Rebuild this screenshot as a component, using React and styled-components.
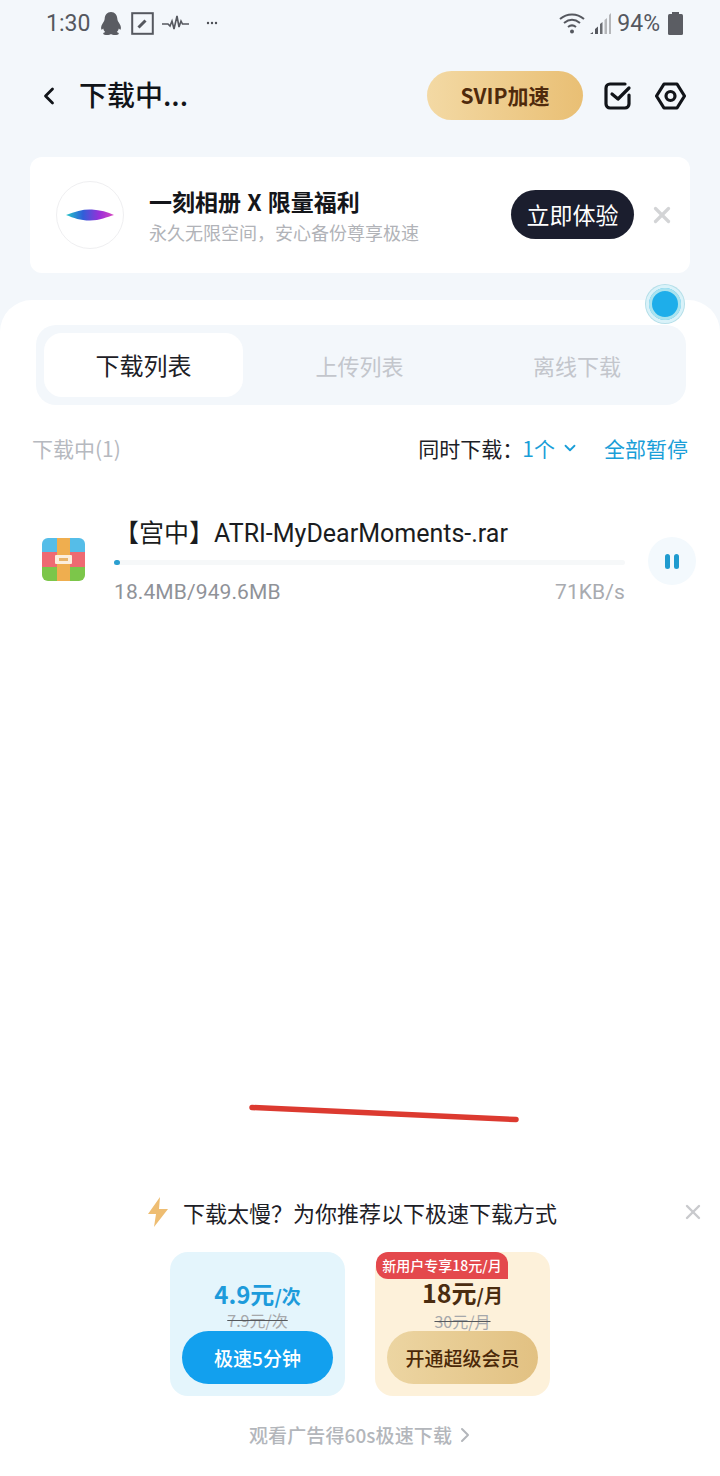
import styled, { createGlobalStyle } from "styled-components";
import { ChevronLeft, ChevronDown, ChevronRight, X } from "lucide-react";

const cjk = `"Noto Sans CJK SC", "Noto Sans", sans-serif`;
const latin = `Roboto, "Noto Sans CJK SC", sans-serif`;

const GlobalStyle = createGlobalStyle`
  * { box-sizing: border-box; }
  html, body { margin: 0; padding: 0; background: #f3f7fb; }
  body { font-family: ${cjk}; }
`;

const Page = styled.div`
  position: relative;
  width: 720px;
  height: 1476px;
  overflow: hidden;
  display: flex;
  flex-direction: column;
  background: #f3f7fb;
`;

const StatusBar = styled.div`
  height: 46px;
  padding: 0 37px 0 46px;
  display: flex;
  align-items: center;
  color: #55585f;
`;

const Clock = styled.span`
  font: 400 23px/1 ${latin};
  margin-right: 9px;
`;

const StatusLeft = styled.div`
  display: flex;
  align-items: center;
  gap: 8px;
`;

const StatusRight = styled.div`
  margin-left: auto;
  display: flex;
  align-items: center;
  gap: 4px;
`;

const Battery = styled.span`
  font: 400 23px/1 ${latin};
  margin: 0 4px 0 1px;
`;

const Header = styled.header`
  margin-top: 25px;
  height: 49px;
  padding: 0 34px 0 35px;
  display: flex;
  align-items: center;
`;

const Title = styled.h1`
  margin: -4px 0 0 16px;
  font: 500 28px/1 ${cjk};
  color: #111419;
`;

const SvipButton = styled.button`
  margin-left: auto;
  width: 156px;
  height: 49px;
  border: 0;
  border-radius: 25px;
  background: linear-gradient(90deg, #f3d9a4 0%, #e9bf74 100%);
  color: #4f2a0c;
  font: 700 21px/1 ${cjk};
  padding: 0;
`;

const HeaderIcons = styled.div`
  margin-left: 20px;
  display: flex;
  align-items: center;
  gap: 22px;
`;

const Banner = styled.section`
  margin: 37px 30px 0;
  height: 116px;
  padding: 0 15px 0 26px;
  display: flex;
  align-items: center;
  background: #fff;
  border-radius: 12px;
`;

const LogoCircle = styled.div`
  width: 68px;
  height: 68px;
  flex: none;
  border-radius: 50%;
  border: 1px solid #efeff1;
  display: flex;
  align-items: center;
  justify-content: center;
`;

const BannerText = styled.div`
  margin-left: 25px;
  flex: 1;
`;

const BannerTitle = styled.div`
  margin-top: -1px;
  font: 700 23px/30px ${cjk};
  word-spacing: 1px;
  color: #14161a;
`;

const BannerSub = styled.div`
  margin-top: 4px;
  font: 400 18px/24px ${cjk};
  color: #b1b3b8;
`;

const TryButton = styled.button`
  width: 123px;
  height: 49px;
  margin-top: -2px;
  border: 0;
  padding: 0;
  border-radius: 25px;
  background: #1b1e2e;
  color: #fff;
  font: 400 23px/1 ${cjk};
`;

const BannerClose = styled.div`
  margin-left: 15px;
  display: flex;
  color: #d3d4d6;
`;

const Sheet = styled.main`
  margin-top: 27px;
  flex: 1;
  display: flex;
  flex-direction: column;
  background: #fff;
  border-radius: 32px 32px 0 0;
`;

const Tabs = styled.div`
  margin: 25px 34px 0 36px;
  height: 80px;
  padding: 8px;
  display: grid;
  grid-template-columns: 199px 233px 202px;
  background: #f3f7fb;
  border-radius: 20px;
`;

const Tab = styled.div`
  display: flex;
  align-items: center;
  justify-content: center;
  border-radius: 18px;
  font: 400 ${(p) => (p.$active ? "24px" : "22px")}/1 ${cjk};
  color: ${(p) => (p.$active ? "#1d2026" : "#c3c6cc")};
  background: ${(p) => (p.$active ? "#fff" : "transparent")};
`;

const Summary = styled.div`
  margin-top: 24px;
  padding: 0 32px;
  height: 38px;
  display: flex;
  align-items: center;
`;

const SummaryLabel = styled.span`
  font: 400 21px/1 ${cjk};
  color: #b6b9bf;
`;

const Concurrent = styled.span`
  margin-left: auto;
  display: flex;
  align-items: center;
  font: 400 21px/1 ${cjk};
  color: #1d2026;
`;

const Count = styled.span`
  color: #1a9ed8;
  margin: 0 6px 0 -1px;
`;

const PauseAll = styled.span`
  margin-left: 25px;
  font: 400 21px/1 ${cjk};
  color: #1a9ed8;
`;

const Row = styled.div`
  margin-top: 51px;
  padding: 0 24px 0 42px;
  display: flex;
  align-items: center;
`;

const RowBody = styled.div`
  margin-left: 29px;
  width: 511px;
`;

const FileName = styled.div`
  font: 400 25px/32px ${latin};
  color: #1a1c20;
  white-space: nowrap;
`;

const Track = styled.div`
  margin-top: 10px;
  height: 5px;
  border-radius: 3px;
  background: #f6f8f9;
`;

const Fill = styled.div`
  height: 100%;
  border-radius: 3px;
  background: #2b9fd0;
`;

const RowMeta = styled.div`
  margin-top: 15px;
  display: flex;
  justify-content: space-between;
  font: 400 21px/24px ${latin};
  letter-spacing: 0.1px;
  color: #8f9298;
`;

const Speed = styled.span`
  color: #a9abb0;
`;

const PauseButton = styled.div`
  margin-left: 23px;
  width: 48px;
  height: 48px;
  flex: none;
  border-radius: 50%;
  background: #f3f9fd;
  display: flex;
  align-items: center;
  justify-content: center;
  gap: 4px;
`;

const PauseBar = styled.i`
  width: 5px;
  height: 15px;
  border-radius: 2.5px;
  background: #1f9bcf;
`;

const Promo = styled.section`
  margin-top: auto;
  padding-bottom: 27px;
  display: flex;
  flex-direction: column;
  align-items: center;
`;

const PromoHead = styled.div`
  position: relative;
  width: 100%;
  height: 40px;
  display: flex;
  align-items: center;
  justify-content: center;
  font: 400 22px/1 ${cjk};
  color: #1d2026;
  gap: 14px;
  padding-right: 16px;
`;

const PromoClose = styled.div`
  position: absolute;
  right: 15px;
  top: 8px;
  display: flex;
  color: #c9cacd;
`;

const Cards = styled.div`
  margin-top: 20px;
  display: flex;
  gap: 30px;
`;

const Card = styled.div`
  position: relative;
  width: 175px;
  height: 144px;
  padding: ${(p) => (p.$gold ? "25px" : "27px")} 12px 0;
  border-radius: 18px;
  background: ${(p) => (p.$gold ? "#fdf1da" : "#e4f5fc")};
  display: flex;
  flex-direction: column;
  align-items: center;
`;

const Ribbon = styled.div`
  position: absolute;
  left: 1px;
  top: 0;
  width: 132px;
  height: 27px;
  border-radius: 12px 12px 0 12px;
  background: #e4484c;
  color: #fff;
  font: 500 14px/27px ${cjk};
  text-align: center;
  white-space: nowrap;
`;

const Price = styled.div`
  font: 700 ${(p) => (p.$gold ? "25px" : "24px")}/30px ${cjk};
  color: ${(p) => (p.$gold ? "#4a2c10" : "#1d9bdb")};
  white-space: nowrap;
`;

const Per = styled.span`
  font-size: 19px;
  font-weight: 700;
`;

const OldPrice = styled.div`
  margin-top: ${(p) => (p.$gold ? "1px" : "-1px")};
  font: 400 16px/20px ${cjk};
  color: #a6a8ab;
  text-decoration: line-through;
  text-decoration-color: #55585c;
  white-space: nowrap;
`;

const CardButton = styled.button`
  margin-top: ${(p) => (p.$gold ? "0" : "1px")};
  width: 151px;
  height: 53px;
  flex: none;
  padding: 0;
  border: 0;
  border-radius: 27px;
  font: 500 19px/1 ${cjk};
  background: ${(p) =>
    p.$gold ? "linear-gradient(90deg, #ecd5a2, #e2c182)" : "#12a0ee"};
  color: ${(p) => (p.$gold ? "#4a2808" : "#fff")};
`;

const AdLink = styled.div`
  margin-top: 25px;
  padding-left: 6px;
  display: flex;
  align-items: center;
  gap: 1px;
  font: 500 19px/28px ${cjk};
  letter-spacing: 0.1px;
  color: #b3b6bb;
`;

const Scribble = styled.svg`
  position: absolute;
  left: 240px;
  top: 1098px;
`;

const FloatDot = styled.div`
  position: absolute;
  left: 646px;
  top: 285px;
  width: 38px;
  height: 38px;
  border-radius: 50%;
  background: #1eaeea;
  border: 3px solid #d9f2f9;
  box-shadow: inset 0 0 0 3px #a9e3ef, 0 0 0 1px #b5dfe9;
`;

const RarSvg = styled.svg`
  flex: none;
  margin-top: -4px;
`;

const Dots = styled.svg`
  margin-left: 9px;
`;

const QQIcon = () => (
  <svg width="24" height="25" viewBox="0 0 24 25" fill="#5a5c62">
    <path d="M12 1c4 0 6 3 6.300 6.500.1 1.500.5 2.500 1.500 4 1.500 2.300 2.500 4.500 2 6.500-.3 1-1 .8-2-.5-.3 1.500-1 2.700-2 3.500 1.500.5 2 1 2 1.700 0 .9-2 1.300-4 1.300-1.500 0-3-.4-3.800-1-.8.6-2.300 1-3.800 1-2 0-4-.4-4-1.300 0-.7.5-1.200 2-1.700-1-.8-1.700-2-2-3.500-1 1.300-1.700 1.500-2 .5-.5-2 .5-4.200 2-6.500 1-1.500 1.400-2.500 1.500-4C5.900 4 8 1 12 1z" />
  </svg>
);

const EditBoxIcon = () => (
  <svg width="23" height="23" viewBox="0 0 23 23" fill="none" stroke="#55585f">
    <rect x="1.200" y="1.200" width="20.600" height="20.600" strokeWidth="2" />
    <path d="M7.500 15.500l7-7" strokeWidth="3" />
  </svg>
);

const PulseIcon = () => (
  <svg width="27" height="16" viewBox="0 0 27 16" fill="none" stroke="#55585f" strokeWidth="1.600">
    <path d="M0 9h6l2 2 2-5 2 8 3-13 2 11 2-6 1.500 3H27" />
  </svg>
);

const DotsIcon = () => (
  <Dots width="12" height="4" viewBox="0 0 12 4" fill="#4b4e54">
    <circle cx="2" cy="2" r="1.200" />
    <circle cx="6" cy="2" r="1.200" />
    <circle cx="10" cy="2" r="1.200" />
  </Dots>
);

const WifiIcon = () => (
  <svg width="26" height="24" viewBox="0 0 26 24" fill="none" stroke="#55585f" strokeWidth="2">
    <path d="M1 8c7-6 17-6 24 0M5 12c5-4 11-4 16 0M9 16c2.500-2 5.500-2 8 0" />
    <circle cx="13" cy="20.500" r="2" fill="#55585f" stroke="none" />
  </svg>
);

const SignalIcon = () => (
  <svg width="23" height="23" viewBox="0 0 23 23">
    <path d="M1 22l3-2v2zM6 22v-5l3-2.500V22z" fill="#55585f" />
    <path d="M11 22V12l2.500-2v12z" fill="#6a6d72" />
    <path d="M15.500 22V8L18 6v16zM20 22V3l2-2v21z" fill="#b5b7ba" />
  </svg>
);

const BatteryIcon = () => (
  <svg width="15" height="23" viewBox="0 0 15 23" fill="#5b5d63">
    <rect x="4" y="0" width="7" height="3" />
    <rect x="0" y="2" width="15" height="21" rx="1.500" />
  </svg>
);

const ChecklistIcon = () => (
  <svg width="30" height="30" viewBox="0 0 30 30" fill="none" stroke="#111419" strokeWidth="3.200" strokeLinecap="round" strokeLinejoin="round">
    <path d="M26 14v9a4 4 0 0 1-4 4H7a4 4 0 0 1-4-4V7a4 4 0 0 1 4-4h15" />
    <path d="M9 13l6 5 11-11" />
  </svg>
);

const GearIcon = () => (
  <svg width="31" height="28" viewBox="0 0 31 28" fill="none" stroke="#111419" strokeWidth="3.200" strokeLinejoin="round">
    <path d="M9 2h13l7.500 12L22 26H9L1.500 14z" />
    <circle cx="15.500" cy="14" r="4.500" />
  </svg>
);

const FeatherLogo = () => (
  <svg width="48" height="12" viewBox="0 0 48 12">
    <defs>
      <linearGradient id="feather" x1="0" x2="1" y1="0" y2="0">
        <stop offset="0" stopColor="#22c6c8" />
        <stop offset="0.35" stopColor="#2f5fd8" />
        <stop offset="0.7" stopColor="#9a2fd8" />
        <stop offset="1" stopColor="#d848c0" />
      </linearGradient>
    </defs>
    <path d="M0 6C10 2 18 0 26 .5 34 1 42 3 48 6c-7 2-14 5.500-24 5.500C14 11.500 8 9 0 6z" fill="url(#feather)" />
  </svg>
);

const RarIcon = () => (
  <RarSvg width="43" height="43" viewBox="0 0 43 43">
    <defs>
      <clipPath id="rar">
        <rect width="43" height="43" rx="6" />
      </clipPath>
    </defs>
    <g clipPath="url(#rar)">
      <rect width="43" height="14" fill="#55bde8" />
      <rect y="14" width="43" height="15" fill="#ee6a72" />
      <rect y="29" width="43" height="14" fill="#7cc64a" />
      <rect x="15" width="13" height="43" fill="#efae4f" />
      <rect x="13" y="17" width="17" height="9" rx="1" fill="#fbeedd" />
      <rect x="17" y="20" width="9" height="3" fill="#e8b46a" />
    </g>
  </RarSvg>
);

const BoltIcon = () => (
  <svg width="22" height="30" viewBox="0 0 22 30" fill="#eebd72">
    <path d="M13 0L1 17h8l-2 13 14-18h-9z" />
  </svg>
);

export default function App() {
  return (
    <Page>
      <GlobalStyle />
      <StatusBar>
        <Clock>1:30</Clock>
        <StatusLeft>
          <QQIcon />
          <EditBoxIcon />
          <PulseIcon />
          <DotsIcon />
        </StatusLeft>
        <StatusRight>
          <WifiIcon />
          <SignalIcon />
          <Battery>94%</Battery>
          <BatteryIcon />
        </StatusRight>
      </StatusBar>

      <Header>
        <ChevronLeft size={28} color="#111419" strokeWidth={2.4} />
        <Title>下载中...</Title>
        <SvipButton>SVIP加速</SvipButton>
        <HeaderIcons>
          <ChecklistIcon />
          <GearIcon />
        </HeaderIcons>
      </Header>

      <Banner>
        <LogoCircle>
          <FeatherLogo />
        </LogoCircle>
        <BannerText>
          <BannerTitle>一刻相册 X 限量福利</BannerTitle>
          <BannerSub>永久无限空间，安心备份尊享极速</BannerSub>
        </BannerText>
        <TryButton>立即体验</TryButton>
        <BannerClose>
          <X size={26} strokeWidth={3} />
        </BannerClose>
      </Banner>

      <Sheet>
        <Tabs>
          <Tab $active>下载列表</Tab>
          <Tab>上传列表</Tab>
          <Tab>离线下载</Tab>
        </Tabs>

        <Summary>
          <SummaryLabel>下载中(1)</SummaryLabel>
          <Concurrent>
            同时下载：<Count>1个</Count>
            <ChevronDown size={18} color="#1a9ed8" strokeWidth={2.4} />
          </Concurrent>
          <PauseAll>全部暂停</PauseAll>
        </Summary>

        <Row>
          <RarIcon />
          <RowBody>
            <FileName>【宫中】ATRI-MyDearMoments-.rar</FileName>
            <Track>
              <Fill style={{ width: "1.2%" }} />
            </Track>
            <RowMeta>
              <span>18.4MB/949.6MB</span>
              <Speed>71KB/s</Speed>
            </RowMeta>
          </RowBody>
          <PauseButton>
            <PauseBar />
            <PauseBar />
          </PauseButton>
        </Row>

        <Promo>
          <PromoHead>
            <BoltIcon />
            下载太慢？为你推荐以下极速下载方式
            <PromoClose>
              <X size={24} strokeWidth={2.4} />
            </PromoClose>
          </PromoHead>
          <Cards>
            <Card>
              <Price>
                4.9元<Per>/次</Per>
              </Price>
              <OldPrice>7.9元/次</OldPrice>
              <CardButton>极速5分钟</CardButton>
            </Card>
            <Card $gold>
              <Ribbon>新用户专享18元/月</Ribbon>
              <Price $gold>
                18元<Per>/月</Per>
              </Price>
              <OldPrice $gold>30元/月</OldPrice>
              <CardButton $gold>开通超级会员</CardButton>
            </Card>
          </Cards>
          <AdLink>
            观看广告得60s极速下载
            <ChevronRight size={24} color="#b3b6bb" strokeWidth={2} />
          </AdLink>
        </Promo>
      </Sheet>

      <FloatDot />
      <Scribble width="290" height="32" viewBox="0 0 290 32">
        <path d="M12 9.500L276 21.500" stroke="#dc3a30" strokeWidth="5.500" strokeLinecap="round" />
      </Scribble>
    </Page>
  );
}
